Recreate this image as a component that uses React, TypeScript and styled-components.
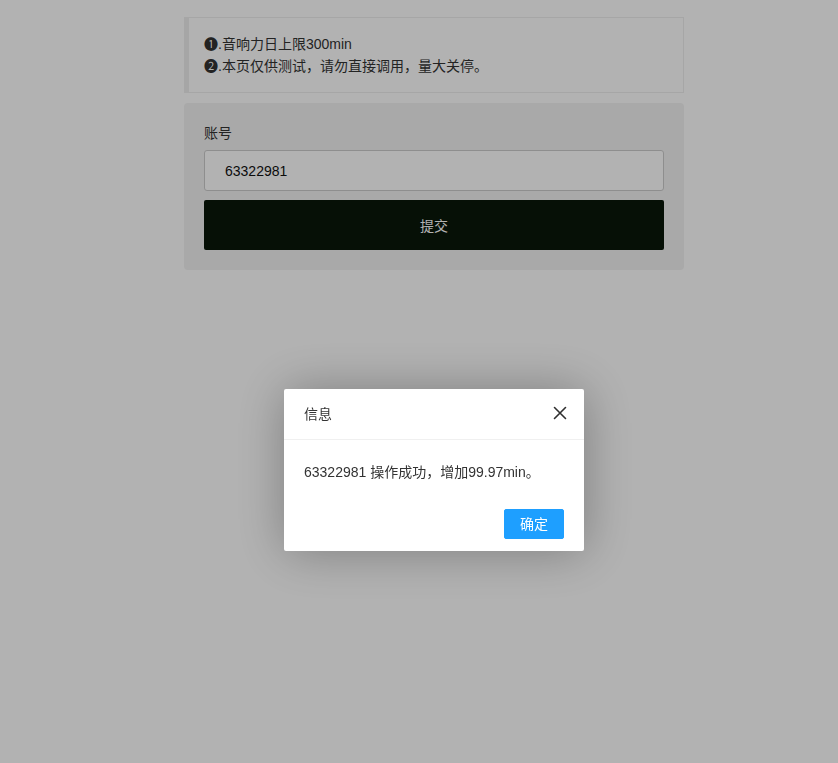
import React from "react";
import styled, { createGlobalStyle } from "styled-components";

const GlobalStyle = createGlobalStyle`
  html, body {
    margin: 0;
    padding: 0;
    background: #ffffff;
    font-family: "Liberation Sans", "Noto Sans CJK SC", sans-serif;
    font-size: 14px;
    color: #333333;
  }
  * {
    box-sizing: border-box;
  }
`;

const App: React.FC = () => {
  return (
    <>
      <GlobalStyle />
      <StyledPage>
        <StyledContainer>
          <StyledQuote>
            <StyledQuoteLine>❶.音响力日上限300min</StyledQuoteLine>
            <StyledQuoteLine>❷.本页仅供测试，请勿直接调用，量大关停。</StyledQuoteLine>
          </StyledQuote>
          <StyledCard>
            <StyledLabel>账号</StyledLabel>
            <StyledInput defaultValue="63322981" />
            <StyledSubmit type="button">提交</StyledSubmit>
          </StyledCard>
        </StyledContainer>
      </StyledPage>

      <StyledShade />

      <StyledDialog>
        <StyledDialogTitle>
          信息
          <StyledClose aria-label="close">
            <svg width="14" height="14" viewBox="0 0 14 14">
              <path
                d="M1.5 1.5 L12.5 12.5 M12.5 1.5 L1.5 12.5"
                stroke="#2f2f2f"
                strokeWidth="1.6"
                strokeLinecap="round"
              />
            </svg>
          </StyledClose>
        </StyledDialogTitle>
        <StyledDialogContent>63322981 操作成功，增加99.97min。</StyledDialogContent>
        <StyledDialogFooter>
          <StyledConfirm type="button">确定</StyledConfirm>
        </StyledDialogFooter>
      </StyledDialog>
    </>
  );
};
export default App;

const StyledPage = styled.div`
  min-height: 763px;
  padding: 17px 0 0 184px;
`;

const StyledContainer = styled.div`
  width: 500px;
  display: flex;
  flex-direction: column;
  gap: 10px;
`;

const StyledQuote = styled.div`
  border: 1px solid #eeeeee;
  border-left-width: 5px;
  padding: 15px;
  line-height: 22px;
`;

const StyledQuoteLine = styled.div`
  font-size: 14px;
  color: #333333;
`;

const StyledCard = styled.div`
  background: #f2f2f2;
  border-radius: 4px;
  padding: 20px 20px 20px;
  display: flex;
  flex-direction: column;
`;

const StyledLabel = styled.div`
  line-height: 20px;
  font-size: 14px;
  color: #333333;
  margin-bottom: 7px;
`;

const StyledInput = styled.input`
  height: 41px;
  width: 100%;
  border: 1px solid #cccccc;
  border-radius: 3px;
  background: #ffffff;
  padding: 0 20px;
  font-family: "Liberation Sans", "Noto Sans CJK SC", sans-serif;
  font-size: 14px;
  color: #111111;
  outline: none;
`;

const StyledSubmit = styled.button`
  margin-top: 9px;
  height: 50px;
  width: 100%;
  border: none;
  border-radius: 2px;
  background: #091709;
  color: #ffffff;
  font-family: "Liberation Sans", "Noto Sans CJK SC", sans-serif;
  font-size: 14px;
  cursor: pointer;
`;

const StyledShade = styled.div`
  position: fixed;
  inset: 0;
  background: rgba(0, 0, 0, 0.3);
`;

const StyledDialog = styled.div`
  position: fixed;
  top: 389px;
  left: 284px;
  width: 300px;
  background: #ffffff;
  border-radius: 2px;
  box-shadow: 1px 1px 50px rgba(0, 0, 0, 0.3);
`;

const StyledDialogTitle = styled.div`
  position: relative;
  height: 51px;
  line-height: 50px;
  padding: 0 80px 0 20px;
  border-bottom: 1px solid #f0f0f0;
  font-size: 14px;
  color: #333333;
`;

const StyledClose = styled.span`
  position: absolute;
  right: 17px;
  top: 17px;
  width: 14px;
  height: 14px;
  display: flex;
  cursor: pointer;
`;

const StyledDialogContent = styled.div`
  padding: 20px;
  line-height: 24px;
  font-size: 14px;
  color: #333333;
`;

const StyledDialogFooter = styled.div`
  display: flex;
  justify-content: flex-end;
  padding: 5px 20px 12px;
`;

const StyledConfirm = styled.button`
  height: 30px;
  line-height: 28px;
  padding: 0 15px;
  border: 1px solid #1e9fff;
  border-radius: 2px;
  background: #1e9fff;
  color: #ffffff;
  font-family: "Liberation Sans", "Noto Sans CJK SC", sans-serif;
  font-size: 14px;
  cursor: pointer;
`;
